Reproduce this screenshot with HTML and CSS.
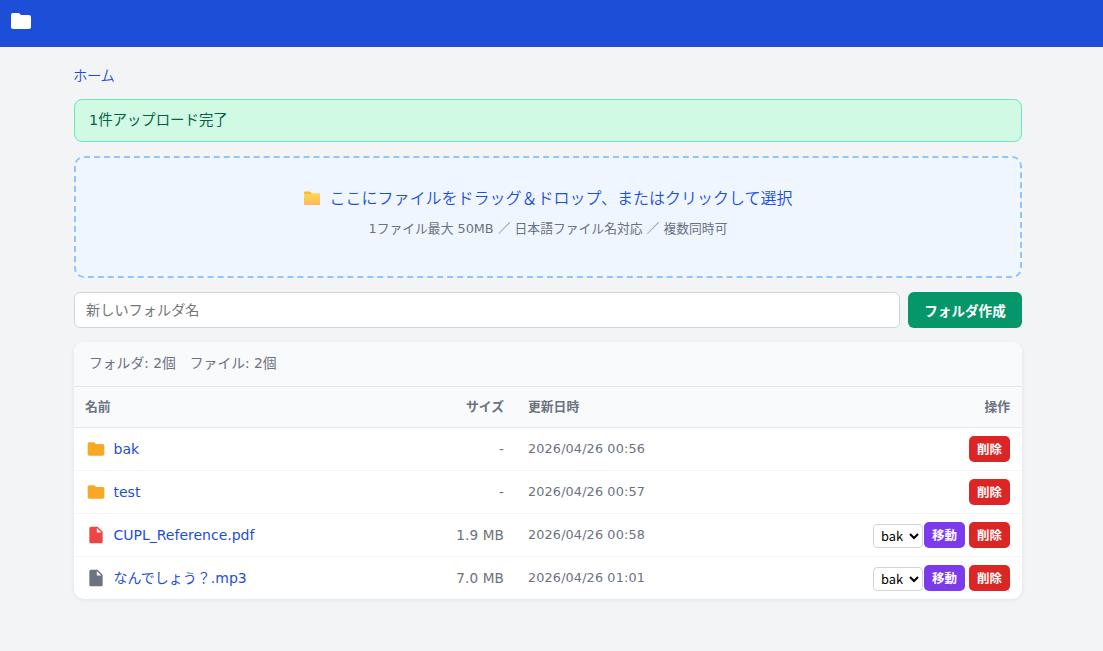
FILE: index.html
```html
<!DOCTYPE html>
<html lang="ja">
<head>
<meta charset="utf-8">
<title>ファイル</title>
<link rel="stylesheet" href="styles.css">
</head>
<body>
<svg class="defs" aria-hidden="true">
  <symbol id="folder" viewBox="0 0 24 24"><path d="M10 4H4c-1.100 0-2 .9-2 2v12c0 1.100.9 2 2 2h16c1.100 0 2-.9 2-2V8c0-1.100-.9-2-2-2h-8l-2-2z"/></symbol>
  <symbol id="file" viewBox="0 0 24 24"><path d="M6 2c-1.100 0-2 .9-2 2v16c0 1.100.9 2 2 2h12c1.100 0 2-.9 2-2V8l-6-6H6zm7 7V3.500L18.500 9H13z"/></symbol>
</svg>
<header class="topbar"><svg class="logo"><use href="#folder"/></svg></header>
<main class="page">
  <nav class="crumbs"><a href="#">ホーム</a></nav>
  <div class="notice">1件アップロード完了</div>
  <section class="dropzone">
    <p class="drop-title"><svg class="drop-icon" viewBox="0 0 18 16">
      <defs><linearGradient id="fold" x1="0" y1="0" x2="0" y2="1"><stop offset="0" stop-color="#ffd84f"/><stop offset="1" stop-color="#ffb65c"/></linearGradient></defs>
      <path d="M1 2.500q0-1 1-1h5l2 2h7q1 0 1 1V14H1z" fill="#fbb934"/><path d="M1 4h15q1 0 1 1v9q0 1-1 1H2q-1 0-1-1z" fill="url(#fold)"/></svg><span>ここにファイルをドラッグ＆ドロップ、またはクリックして選択</span></p>
    <p class="drop-hint">1ファイル最大 50MB ／ 日本語ファイル名対応 ／ 複数同時可</p>
  </section>
  <form class="create">
    <input class="create-name" type="text" placeholder="新しいフォルダ名">
    <button class="create-btn" type="button">フォルダ作成</button>
  </form>
  <section class="card">
    <div class="summary"><span>フォルダ: 2個</span><span>ファイル: 2個</span></div>
    <table class="files">
      <thead><tr><th class="c-name">名前</th><th class="c-size">サイズ</th><th class="c-date">更新日時</th><th class="c-ops">操作</th></tr></thead>
      <tbody>
        <tr><td class="c-name"><div class="entry"><svg class="icon folder"><use href="#folder"/></svg><a href="#">bak</a></div></td><td class="c-size">-</td><td class="c-date">2026/04/26 00:56</td><td class="c-ops"><div class="ops"><button class="btn del">削除</button></div></td></tr>
        <tr><td class="c-name"><div class="entry"><svg class="icon folder"><use href="#folder"/></svg><a href="#">test</a></div></td><td class="c-size">-</td><td class="c-date">2026/04/26 00:57</td><td class="c-ops"><div class="ops"><button class="btn del">削除</button></div></td></tr>
        <tr><td class="c-name"><div class="entry"><svg class="icon pdf"><use href="#file"/></svg><a href="#">CUPL_Reference.pdf</a></div></td><td class="c-size">1.9 MB</td><td class="c-date">2026/04/26 00:58</td><td class="c-ops"><div class="ops"><select class="target"><option>bak</option></select><button class="btn move">移動</button><button class="btn del">削除</button></div></td></tr>
        <tr><td class="c-name"><div class="entry"><svg class="icon other"><use href="#file"/></svg><a href="#">なんでしょう？.mp3</a></div></td><td class="c-size">7.0 MB</td><td class="c-date">2026/04/26 01:01</td><td class="c-ops"><div class="ops"><select class="target"><option>bak</option></select><button class="btn move">移動</button><button class="btn del">削除</button></div></td></tr>
      </tbody>
    </table>
  </section>
</main>
</body>
</html>
```

FILE: styles.css
```css
* { box-sizing: border-box; margin: 0; padding: 0; }
body { height: 651px; overflow: hidden; background: #f3f4f6; font-family: "DejaVu Sans", "Noto Sans CJK JP", sans-serif; color: #1f2937; }
a { color: #1d4ed8; text-decoration: none; }
.defs { display: none; }
.topbar { height: 47px; padding: 9px 9px 0; background: #1d4ed8; }
.logo { display: block; width: 24px; height: 24px; fill: #fff; }
.page { width: 948px; margin-left: 74px; padding-top: 18px; }
.crumbs { height: 34px; margin-left: -1px; font: 350 14.4px/20px "Noto Sans CJK JP", sans-serif; letter-spacing: -.4px; }
.notice { height: 43px; padding: 0 14px; border: 1px solid #6ee7b7; border-radius: 8px; background: #d1fae5; color: #065f46; font-size: 14.4px; line-height: 41px; }
.dropzone { height: 122px; margin-top: 14px; padding-top: 26px; border: 2px dashed #93c5fd; border-radius: 10px; background: #eff6ff; text-align: center; }
.drop-title { display: flex; align-items: center; justify-content: center; gap: 8px; height: 28px; font: 350 16px/24px "Noto Sans CJK JP", sans-serif; color: #1d4ed8; }
.drop-title span { padding-bottom: 3px; }
.drop-icon { width: 18px; height: 16px; }
.drop-hint { margin-top: 6px; font-size: 12.8px; line-height: 22px; color: #6b7280; }
.create { display: flex; gap: 8px; height: 36px; margin-top: 14px; }
.create-name { flex: 1; padding: 0 11px 3px; border: 1px solid #d1d5db; border-radius: 6px; background: #fff; font: 14.2px "Noto Sans CJK JP", sans-serif; }
.create-name::placeholder { color: #757575; }
.create-btn { width: 114px; border: 0; border-radius: 6px; background: #059669; color: #fff; font: bold 13.6px "Noto Sans CJK JP", sans-serif; }
.card { height: 257px; margin-top: 14px; border-radius: 10px; background: #fff; box-shadow: 0 1px 4px rgba(0, 0, 0, .08); overflow: hidden; }
.summary { display: flex; gap: 14px; height: 45px; padding: 0 15px; border-bottom: 1px solid #e5e7eb; background: #f9fafb; color: #6b7280; font-size: 13.8px; line-height: 42px; }
.files { width: 100%; border-collapse: separate; border-spacing: 0; table-layout: fixed; }
.files th { height: 41px; padding: 0 12px 4px; border-bottom: 1px solid #e5e7eb; background: #f9fafb; color: #6b7280; font: bold 12.8px "Noto Sans CJK JP", sans-serif; text-align: left; }
.files td { height: 43px; padding: 0 12px; border-bottom: 1px solid #f3f4f6; font-size: 14.4px; }
.files tr:last-child td { height: 42px; border-bottom: 0; }
.files .c-name { width: 342px; }
.files th.c-name { padding-left: 11px; }
.files .c-size { width: 100px; text-align: right; }
.files .c-date { width: 180px; }
.files .c-ops { text-align: right; }
.files td.c-size, .files td.c-date { padding-bottom: 1px; color: #6b7280; font-size: 12.8px; letter-spacing: .14px; }
.files td.c-size { font-size: 13.6px; }
.entry { display: flex; align-items: center; gap: 7.5px; line-height: 24px; }
.entry a { font-size: 14px; }
.icon { width: 20px; height: 20px; flex: none; }
.folder { fill: #f9a825; }
.pdf { fill: #ef4444; }
.other { fill: #6b7280; }
.ops { display: flex; align-items: center; justify-content: flex-end; }
.btn { width: 41px; height: 26px; padding-bottom: 1px; border: 0; border-radius: 5px; color: #fff; font: bold 12.5px "Noto Sans CJK JP", sans-serif; }
.move { margin: 0 4px 0 1px; background: #7c3aed; }
.del { background: #dc2626; }
.target { width: 50px; height: 24px; margin-top: 2px; padding: 0 0 2px 3px; border: 1px solid #d1d5db; border-radius: 4px; background: #fff; color: #000; font: 12.8px "Noto Sans CJK JP", sans-serif; }
```
